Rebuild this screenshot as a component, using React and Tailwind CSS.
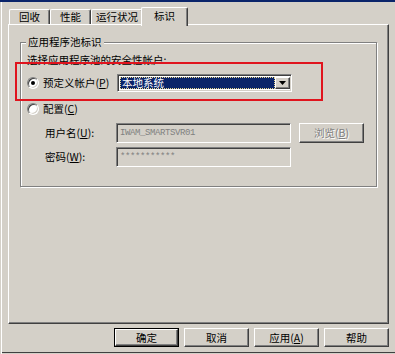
import React from 'react';

const raised = 'border border-t-white border-l-white border-r-[#404040] border-b-[#404040] shadow-[inset_-1px_-1px_0_#808080]';
const sunken = 'border border-t-[#808080] border-l-[#808080] border-r-white border-b-white shadow-[inset_1px_1px_0_#404040,inset_-1px_-1px_0_#d4d0c8]';

const Key = ({ children }) => <span className="underline underline-offset-[1px]">{children}</span>;

const Tab = ({ label, width, active }) =>
  active ? (
    <div className={`relative z-10 -ml-[2px] -mb-[2px] h-[19px] ${width} flex items-center justify-center pb-[3px] bg-[#d4d0c8] rounded-t-[2px] border-t border-l border-r border-t-white border-l-white border-r-[#404040] shadow-[inset_-1px_0_0_#808080]`}>
      {label}
    </div>
  ) : (
    <div className={`h-[15px] ${width} flex items-center justify-center rounded-t-[2px] border-t border-l border-r border-t-white border-l-white border-r-[#404040] shadow-[inset_-1px_0_0_#808080]`}>
      {label}
    </div>
  );

const Radio = ({ checked }) => (
  <div className="w-[12px] h-[12px] rounded-full bg-white border border-t-[#808080] border-l-[#808080] border-r-white border-b-white shadow-[inset_1px_1px_0_#404040,inset_-1px_-1px_0_#d4d0c8] flex items-center justify-center shrink-0">
    {checked && <div className="w-[4px] h-[4px] rounded-full bg-black" />}
  </div>
);

const Button = ({ children, primary }) => (
  <div className={primary ? 'w-[65px] h-[19px] border border-black' : 'w-[65px] h-[19px]'}>
    <div className={`w-full h-full flex items-center justify-center ${raised}`}>{children}</div>
  </div>
);

export default function App() {
  return (
    <div className="relative w-[395px] h-[354px] overflow-hidden bg-[#d4d0c8] text-black text-[10.5px] leading-[14px] font-['Noto_Sans_CJK_SC',sans-serif] shadow-[inset_1px_0_0_#d4d0c8,inset_2px_0_0_#ffffff,inset_0_-1px_0_#d4d0c8,inset_0_-2px_0_#404040]">
      <div className="h-[2px] bg-[#0a246a]" />

      {/* Tabs */}
      <div className="relative z-10 h-[22px] pl-[9px] flex items-end">
        <Tab label="回收" width="w-[41px]" />
        <Tab label="性能" width="w-[41px]" />
        <Tab label="运行状况" width="w-[52px]" />
        <Tab label="标识" width="w-[47px]" active />
      </div>

      {/* Tab panel */}
      <div className={`ml-[8px] w-[381px] h-[300px] pt-[17px] pl-[11px] ${raised}`}>
        <div className="relative w-[357px] h-[145px] border border-[#808080] shadow-[inset_1px_1px_0_#fff,1px_1px_0_#fff]">
          <div className="absolute -top-[8px] left-[5px] px-[2px] bg-[#d4d0c8]">应用程序池标识</div>

          <div className="mt-[10px] pl-[6px]">选择应用程序池的安全性帐户:</div>

          <div className="mt-[7px] h-[18px] pl-[6px] flex items-center">
            <div className="w-[90px] flex items-center gap-[4px]">
              <Radio checked />
              <span>预定义帐户(<Key>P</Key>)</span>
            </div>
            <div className={`w-[175px] h-[18px] p-[1px] bg-white flex ${sunken}`}>
              <div className="flex-1 ml-[1px] mt-[1px] mb-[1px] bg-[#0a246a] text-white border border-dotted border-[#e8d890] flex items-center pl-[1px]">
                本地系统
              </div>
              <div className={`w-[15px] mt-[1px] mb-[1px] bg-[#d4d0c8] flex items-center justify-center ${raised}`}>
                <svg width="7" height="4" viewBox="0 0 7 4">
                  <path d="M0 0h7L3.5 4z" fill="#000" />
                </svg>
              </div>
            </div>
          </div>

          <div className="mt-[10px] h-[14px] pl-[6px] flex items-center gap-[4px]">
            <Radio />
            <span>配置(<Key>C</Key>)</span>
          </div>

          <div className="mt-[7px] h-[20px] pl-[6px] flex items-center">
            <div className="w-[89px] pl-[18px]">用户名(<Key>U</Key>):</div>
            <div className={`w-[175px] h-[20px] pl-[3px] flex items-center text-[#808080] font-['Liberation_Mono',monospace] text-[9px] tracking-[-0.4px] ${sunken}`}>
              IWAM_SMARTSVR01
            </div>
            <div className={`ml-[8px] w-[65px] h-[20px] flex items-center justify-center text-[#808080] [text-shadow:1px_1px_0_#fff] ${raised}`}>
              浏览(<Key>B</Key>)
            </div>
          </div>

          <div className="mt-[4px] h-[20px] pl-[6px] flex items-center">
            <div className="w-[89px] pl-[18px]">密码(<Key>W</Key>):</div>
            <div className={`w-[175px] h-[20px] pl-[3px] flex items-center text-[#808080] font-['Liberation_Mono',monospace] text-[9px] tracking-[-0.4px] ${sunken}`}>
              ***********
            </div>
          </div>
        </div>
      </div>

      {/* Dialog buttons */}
      <div className="mt-[4px] pr-[6px] flex justify-end gap-[5px]">
        <Button primary>确定</Button>
        <Button>取消</Button>
        <Button>应用(<Key>A</Key>)</Button>
        <Button>帮助</Button>
      </div>

      {/* Red annotation box */}
      <div className="absolute left-[15px] top-[62px] w-[308px] h-[39px] border-2 border-[#e0141e]" />
    </div>
  );
}
